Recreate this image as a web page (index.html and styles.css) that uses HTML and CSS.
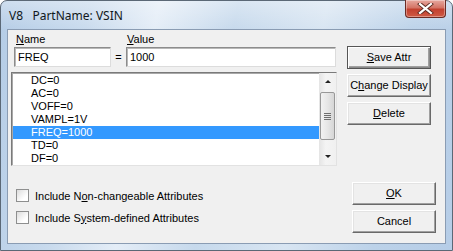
FILE: index.html
```html
<!doctype html>
<html lang="en">

<head>
    <title>V8 PartName: VSIN</title>
    <link rel="stylesheet" href="styles.css">
</head>

<body>

    <div class="window">
        <div class="titlebar">
            <span class="title">V8   PartName: VSIN</span>
            <div class="close">
                <svg width="17" height="11" viewBox="0 0 17 11">
                    <path d="M3 1 L14 10 M14 1 L3 10" stroke="#5a2a22" stroke-width="4" stroke-linecap="square" />
                    <path d="M3 1 L14 10 M14 1 L3 10" stroke="#ffffff" stroke-width="2.2" stroke-linecap="square" />
                </svg>
            </div>
        </div>

        <div class="client">
            <div class="top-row">
                <div class="fields">
                    <div class="labels">
                        <span class="lbl-name"><u>N</u>ame</span>
                        <span class="lbl-value"><u>V</u>alue</span>
                    </div>
                    <div class="inputs">
                        <div class="textbox name-box">FREQ</div>
                        <span class="eq">=</span>
                        <div class="textbox value-box">1000</div>
                    </div>
                    <div class="listbox">
                        <ul class="items">
                            <li>DC=0</li>
                            <li>AC=0</li>
                            <li>VOFF=0</li>
                            <li>VAMPL=1V</li>
                            <li class="selected">FREQ=1000</li>
                            <li>TD=0</li>
                            <li>DF=0</li>
                        </ul>
                        <div class="scrollbar">
                            <div class="sb-btn"><span class="arrow-up"></span></div>
                            <div class="sb-track">
                                <div class="sb-thumb">
                                    <span class="grip"></span>
                                </div>
                            </div>
                            <div class="sb-btn"><span class="arrow-down"></span></div>
                        </div>
                    </div>
                </div>

                <div class="side">
                    <div class="btn default"><u>S</u>ave Attr</div>
                    <div class="btn">C<u>h</u>ange Display</div>
                    <div class="btn"><u>D</u>elete</div>
                </div>
            </div>

            <div class="bottom-row">
                <div class="checks">
                    <div class="check-row">
                        <span class="checkbox"></span>
                        <span>Include N<u>o</u>n-changeable Attributes</span>
                    </div>
                    <div class="check-row">
                        <span class="checkbox"></span>
                        <span>Include S<u>y</u>stem-defined Attributes</span>
                    </div>
                </div>
                <div class="side">
                    <div class="btn"><u>O</u>K</div>
                    <div class="btn">Cancel</div>
                </div>
            </div>
        </div>
    </div>

</body>

</html>
```

FILE: styles.css
```css
body {
    margin: 0;
    padding: 0;
    font-family: "Liberation Sans", Arial, sans-serif;
    font-size: 11px;
    color: #000;
    background-color: #fff;
}

u {
    text-decoration-thickness: 1px;
    text-underline-offset: 1px;
}

/* window frame */
.window {
    width: 453px;
    height: 251px;
    box-sizing: border-box;
    border: 1px solid #5b6876;
    border-radius: 7px 7px 0 0;
    padding: 0 6px 6px 6px;
    display: flex;
    flex-direction: column;
    background:
        linear-gradient(180deg, rgba(255, 255, 255, 0.35) 0%, rgba(255, 255, 255, 0) 12%),
        linear-gradient(100deg, #b4cce6 0%, #c8daed 18%, #e4edf7 32%, #c6d9ec 48%, #d8e5f2 66%, #bcd2e9 84%, #b6cde7 100%);
}

.titlebar {
    height: 28px;
    display: flex;
    justify-content: space-between;
    align-items: flex-start;
}

.title {
    white-space: pre;
    font-family: "Noto Sans", "Open Sans", sans-serif;
    font-size: 12px;
    color: #101820;
    margin-top: 6px;
    margin-left: 2px;
}

.close {
    width: 41px;
    height: 18px;
    box-sizing: border-box;
    margin-top: -1px;
    border: 1px solid #6b2b24;
    border-top: none;
    border-radius: 0 0 4px 4px;
    background: linear-gradient(180deg, #e7a89f 0%, #d47466 45%, #c2402f 55%, #cf5a44 100%);
    box-shadow: inset 0 0 0 1px rgba(255, 255, 255, 0.35);
    display: flex;
    align-items: center;
    justify-content: center;
}

/* client area */
.client {
    flex: 1;
    border: 1px solid #8a9cb3;
    background-color: #f0f0f0;
    padding: 2px 3px 0 3px;
}

.top-row,
.bottom-row {
    display: flex;
}

.bottom-row {
    margin-top: 16px;
}

.fields {
    width: 326px;
}

.labels {
    height: 14px;
    padding-left: 5px;
    display: flex;
    align-items: center;
}

.lbl-name {
    width: 111px;
}

.inputs {
    margin-top: 1px;
    padding-left: 3px;
    display: flex;
    height: 20px;
}

.textbox {
    box-sizing: border-box;
    height: 20px;
    background-color: #fff;
    border: 1px solid;
    border-color: #8c8c8c #dcdcdc #dcdcdc #8c8c8c;
    box-shadow: inset 1px 1px 0 #b8b8b8;
    padding: 3px 2px 0 3px;
}

.name-box {
    width: 97px;
}

.eq {
    width: 15px;
    text-align: center;
    line-height: 20px;
}

.value-box {
    flex: 1;
    margin-right: 1px;
}

/* list */
.listbox {
    margin-top: 5px;
    height: 94px;
    box-sizing: border-box;
    border: 1px solid;
    border-color: #7a7a7a #e2e2e2 #e2e2e2 #7a7a7a;
    box-shadow: inset 1px 1px 0 #a8a8a8;
    background-color: #fff;
    display: flex;
}

.items {
    list-style: none;
    margin: 0;
    padding: 1px 0 0 1px;
    flex: 1;
}

.items li {
    height: 13px;
    line-height: 13px;
    padding-left: 18px;
}

.items li.selected {
    background-color: #3399ff;
    color: #fff;
}

.scrollbar {
    width: 17px;
    display: flex;
    flex-direction: column;
    background: linear-gradient(90deg, #e4e4e4, #f4f4f4 40%, #f0f0f0);
}

.sb-btn {
    height: 17px;
    display: flex;
    align-items: center;
    justify-content: center;
}

.arrow-up {
    border-left: 3px solid transparent;
    border-right: 3px solid transparent;
    border-bottom: 3px solid #222;
}

.arrow-down {
    border-left: 3px solid transparent;
    border-right: 3px solid transparent;
    border-top: 3px solid #222;
}

.sb-track {
    flex: 1;
    padding-top: 2px;
}

.sb-thumb {
    height: 48px;
    margin: 0 1px;
    box-sizing: border-box;
    border: 1px solid #989898;
    border-radius: 2px;
    background: linear-gradient(90deg, #f2f2f2, #e6e6e6 50%, #d6d6d6);
    display: flex;
    align-items: center;
    justify-content: center;
}

.grip {
    width: 7px;
    height: 7px;
    background: repeating-linear-gradient(180deg, #6e6e6e 0, #6e6e6e 1px, transparent 1px, transparent 2px);
}

/* buttons */
.side {
    margin-left: 10px;
    width: 84px;
    display: flex;
    flex-direction: column;
    gap: 5px;
}

.top-row .side {
    padding-top: 14px;
}

.btn {
    height: 23px;
    box-sizing: border-box;
    border: 1px solid;
    border-color: #ffffff #696969 #696969 #ffffff;
    box-shadow: inset -1px -1px 0 #a0a0a0, inset 1px 1px 0 #e3e3e3;
    background-color: #f0f0f0;
    text-align: center;
    line-height: 21px;
    white-space: nowrap;
}

.btn.default {
    border-color: #555555;
    box-shadow: inset 1px 1px 0 #ffffff, inset -1px -1px 0 #8a8a8a, inset -2px -2px 0 #a0a0a0;
}

/* checkboxes */
.checks {
    width: 326px;
    padding-left: 5px;
    padding-top: 7px;
    display: flex;
    flex-direction: column;
    gap: 9px;
}

.check-row {
    display: flex;
    align-items: center;
    height: 13px;
}

.checkbox {
    width: 13px;
    height: 13px;
    box-sizing: border-box;
    border: 1px solid #8e8f8f;
    background: linear-gradient(135deg, #dcdcdc, #ffffff 70%);
    margin-right: 6px;
}
```
